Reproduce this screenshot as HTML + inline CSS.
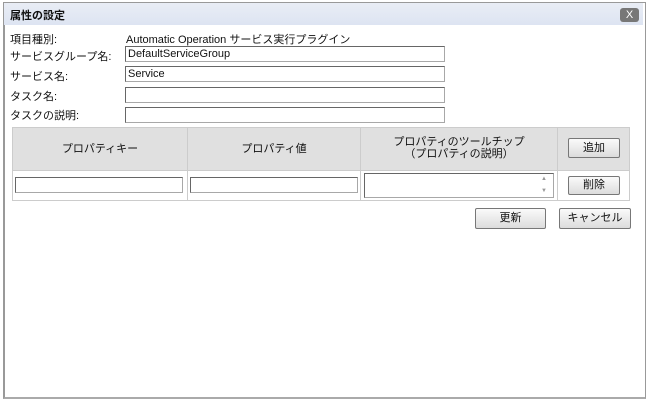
<!DOCTYPE html><html><head><meta charset="utf-8"><style>
body{margin:0;width:648px;height:401px;background:#fff;font-family:"Liberation Sans","Noto Sans CJK JP",sans-serif;font-size:11px;color:#111;position:relative;overflow:hidden}
.a{position:absolute}
.dlg{left:3px;top:2px;width:640px;height:394px;border:1px solid #999;border-left:2px solid #999;border-bottom:2px solid #aaa}
.tb{left:4px;top:3px;width:639px;height:22px;background:linear-gradient(#e9edf5,#dde4f2)}
.in{position:absolute;height:14px;border:1px solid #a8a8a8;border-top-color:#666;border-left-color:#666;background:#fff;font-size:11px;line-height:14px;padding-left:2px;box-sizing:content-box}
.btn{position:absolute;border:1px solid #777;border-radius:2px;background:linear-gradient(#fafafa,#dcdcdc);text-align:center;font-size:11px;box-sizing:border-box}
.cell{position:absolute;border:1px solid #ccc;box-sizing:border-box}
.h{background:#e0e0e0;text-align:center}
</style></head><body>
<div class="a dlg"></div>
<div class="a tb"></div>
<div class="a" style="left:10px;top:7px;font-weight:bold;font-size:11px">属性の設定</div>
<div class="a" style="left:620px;top:8px;width:19px;height:14px;background:#777;border-radius:3px;color:#fff;font-size:11px;text-align:center;line-height:14px">X</div>
<div class="a" style="left:10px;top:31px">項目種別:</div>
<div class="a" style="left:126px;top:31px">Automatic Operation サービス実行プラグイン</div>
<div class="a" style="left:10px;top:48px">サービスグループ名:</div>
<div class="a" style="left:10px;top:68px">サービス名:</div>
<div class="a" style="left:10px;top:88px">タスク名:</div>
<div class="a" style="left:10px;top:107px">タスクの説明:</div>
<div class="in" style="left:125px;top:46px;width:316px">DefaultServiceGroup</div>
<div class="in" style="left:125px;top:66px;width:316px">Service</div>
<div class="in" style="left:125px;top:87px;width:316px"></div>
<div class="in" style="left:125px;top:107px;width:316px"></div>
<div class="cell h" style="left:12px;top:127px;width:176px;height:44px;line-height:42px">プロパティキー</div>
<div class="cell h" style="left:187px;top:127px;width:174px;height:44px;line-height:42px">プロパティ値</div>
<div class="cell h" style="left:360px;top:127px;width:198px;height:44px;padding-top:8px;line-height:12px">プロパティのツールチップ<br>（プロパティの説明）</div>
<div class="cell h" style="left:557px;top:127px;width:73px;height:44px"></div>
<div class="cell" style="left:12px;top:170px;width:176px;height:31px"></div>
<div class="cell" style="left:187px;top:170px;width:174px;height:31px"></div>
<div class="cell" style="left:360px;top:170px;width:198px;height:31px"></div>
<div class="cell" style="left:557px;top:170px;width:73px;height:31px"></div>
<div class="in" style="left:15px;top:177px;width:164px"></div>
<div class="in" style="left:190px;top:177px;width:164px"></div>
<div class="in" style="left:364px;top:173px;width:186px;height:23px"></div>
<div class="a" style="left:541px;top:176px;font-size:6px;color:#999">▲</div>
<div class="a" style="left:541px;top:188px;font-size:6px;color:#999">▼</div>
<div class="btn" style="left:568px;top:138px;width:52px;height:20px;line-height:18px">追加</div>
<div class="btn" style="left:568px;top:176px;width:52px;height:19px;line-height:17px">削除</div>
<div class="btn" style="left:475px;top:208px;width:71px;height:21px;line-height:19px">更新</div>
<div class="btn" style="left:559px;top:208px;width:72px;height:21px;line-height:19px">キャンセル</div>
</body></html>
